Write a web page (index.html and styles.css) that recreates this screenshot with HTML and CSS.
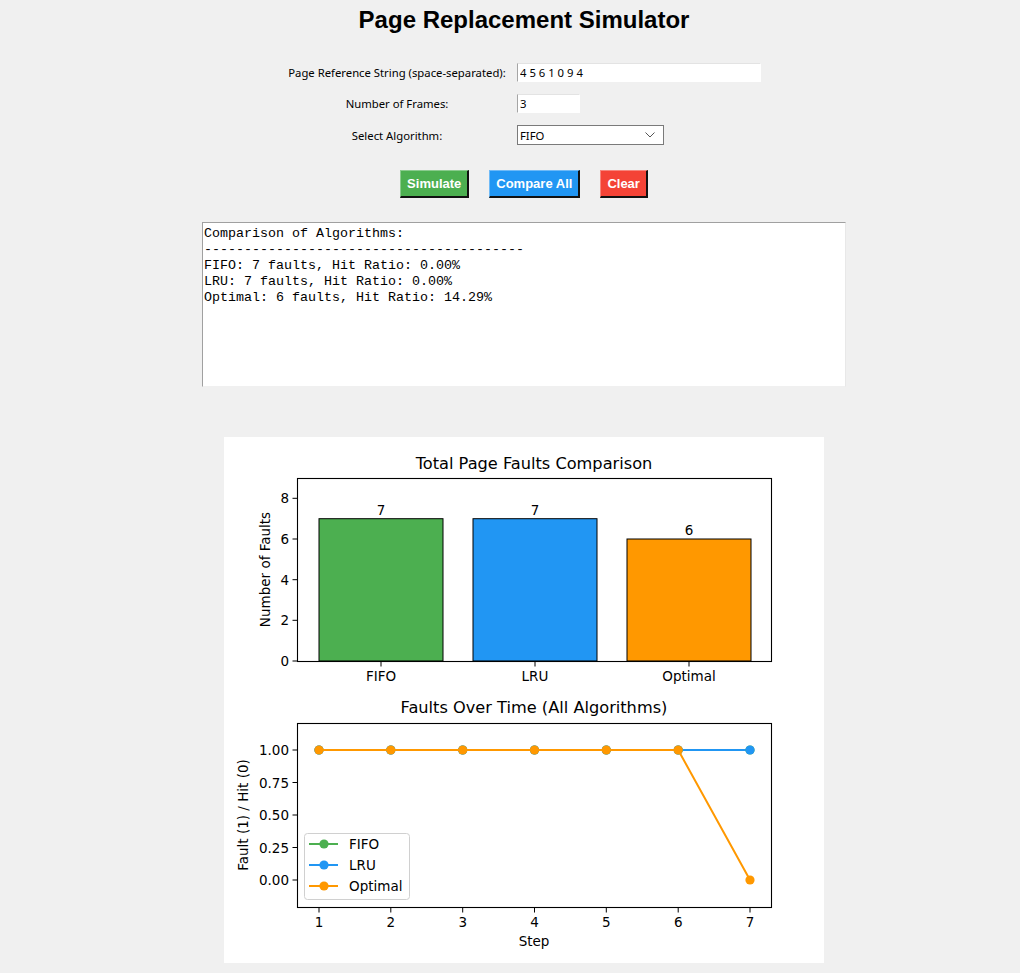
FILE: index.html
```html
<!DOCTYPE html>
<html lang="en">
<head>
<meta charset="utf-8">
<title>Page Replacement Simulator</title>
<link rel="stylesheet" href="styles.css">
</head>
<body>
<main class="app">
  <h1 class="title">Page Replacement Simulator</h1>

  <section class="form">
    <label class="form-label" for="refs">Page Reference String (space-separated):</label>
    <div class="field"><input id="refs" class="entry entry-wide" type="text" value="4 5 6 1 0 9 4"></div>

    <label class="form-label" for="frames">Number of Frames:</label>
    <div class="field"><input id="frames" class="entry entry-short" type="text" value="3"></div>

    <label class="form-label" for="algo">Select Algorithm:</label>
    <div class="field">
      <div class="combo" id="algo">
        <span class="combo-value">FIFO</span>
        <svg class="combo-arrow" width="10" height="6" viewBox="0 0 10 6"><path d="M0.5 0.5 L5 5 L9.5 0.5" fill="none" stroke="#555" stroke-width="1"/></svg>
      </div>
    </div>
  </section>

  <div class="buttons">
    <button class="btn btn-green">Simulate</button>
    <button class="btn btn-blue">Compare All</button>
    <button class="btn btn-red">Clear</button>
  </div>

  <pre class="output">Comparison of Algorithms:
----------------------------------------
FIFO: 7 faults, Hit Ratio: 0.00%
LRU: 7 faults, Hit Ratio: 0.00%
Optimal: 6 faults, Hit Ratio: 14.29%</pre>

  <section class="charts">
    <svg class="chart-svg" width="600" height="526" viewBox="0 0 600 526">
      <!-- Chart 1 -->
      <text class="ct-title" x="310" y="32" text-anchor="middle">Total Page Faults Comparison</text>
      <rect x="95" y="81.7" width="124" height="142.3" fill="#4CAF50" stroke="#000" stroke-width="1"/>
      <rect x="249" y="81.7" width="124" height="142.3" fill="#2196F3" stroke="#000" stroke-width="1"/>
      <rect x="403" y="102" width="124" height="122" fill="#FF9800" stroke="#000" stroke-width="1"/>
      <rect x="73.5" y="41.5" width="474" height="183" fill="none" stroke="#000" stroke-width="1.1"/>
      <text class="ct-tick" x="157" y="78" text-anchor="middle">7</text>
      <text class="ct-tick" x="311" y="78" text-anchor="middle">7</text>
      <text class="ct-tick" x="465" y="98" text-anchor="middle">6</text>
      <g stroke="#000" stroke-width="1">
        <line x1="68.5" y1="224" x2="73" y2="224"/>
        <line x1="68.5" y1="183.3" x2="73" y2="183.3"/>
        <line x1="68.5" y1="142.7" x2="73" y2="142.7"/>
        <line x1="68.5" y1="102" x2="73" y2="102"/>
        <line x1="68.5" y1="61.3" x2="73" y2="61.3"/>
        <line x1="157" y1="225" x2="157" y2="229.5"/>
        <line x1="311" y1="225" x2="311" y2="229.5"/>
        <line x1="465" y1="225" x2="465" y2="229.5"/>
      </g>
      <g class="ct-tick" text-anchor="end">
        <text x="65" y="229">0</text>
        <text x="65" y="188.3">2</text>
        <text x="65" y="147.7">4</text>
        <text x="65" y="107">6</text>
        <text x="65" y="66.3">8</text>
      </g>
      <g class="ct-tick" text-anchor="middle">
        <text x="157" y="244">FIFO</text>
        <text x="311" y="244">LRU</text>
        <text x="465" y="244">Optimal</text>
      </g>
      <text class="ct-tick" text-anchor="middle" transform="translate(46 132.5) rotate(-90)">Number of Faults</text>

      <!-- Chart 2 -->
      <text class="ct-title" x="310" y="276" text-anchor="middle">Faults Over Time (All Algorithms)</text>
      <g fill="none" stroke-width="2" stroke-linejoin="round">
        <polyline stroke="#4CAF50" points="95,313 166.8,313 238.7,313 310.5,313 382.3,313 454.2,313 526,313"/>
        <polyline stroke="#2196F3" points="95,313 166.8,313 238.7,313 310.5,313 382.3,313 454.2,313 526,313"/>
      </g>
      <g fill="#4CAF50">
        <circle cx="95" cy="313" r="4.6"/><circle cx="166.8" cy="313" r="4.6"/><circle cx="238.7" cy="313" r="4.6"/><circle cx="310.5" cy="313" r="4.6"/><circle cx="382.3" cy="313" r="4.6"/><circle cx="454.2" cy="313" r="4.6"/><circle cx="526" cy="313" r="4.6"/>
      </g>
      <g fill="#2196F3">
        <circle cx="95" cy="313" r="4.6"/><circle cx="166.8" cy="313" r="4.6"/><circle cx="238.7" cy="313" r="4.6"/><circle cx="310.5" cy="313" r="4.6"/><circle cx="382.3" cy="313" r="4.6"/><circle cx="454.2" cy="313" r="4.6"/><circle cx="526" cy="313" r="4.6"/>
      </g>
      <polyline fill="none" stroke="#FF9800" stroke-width="2" stroke-linejoin="round" points="95,313 166.8,313 238.7,313 310.5,313 382.3,313 454.2,313 526,443"/>
      <g fill="#FF9800">
        <circle cx="95" cy="313" r="4.6"/><circle cx="166.8" cy="313" r="4.6"/><circle cx="238.7" cy="313" r="4.6"/><circle cx="310.5" cy="313" r="4.6"/><circle cx="382.3" cy="313" r="4.6"/><circle cx="454.2" cy="313" r="4.6"/><circle cx="526" cy="443" r="4.6"/>
      </g>
      <rect x="73.5" y="286.5" width="474" height="184" fill="none" stroke="#000" stroke-width="1.1"/>
      <g stroke="#000" stroke-width="1">
        <line x1="68.5" y1="313" x2="73" y2="313"/>
        <line x1="68.5" y1="345.5" x2="73" y2="345.5"/>
        <line x1="68.5" y1="378" x2="73" y2="378"/>
        <line x1="68.5" y1="410.5" x2="73" y2="410.5"/>
        <line x1="68.5" y1="443" x2="73" y2="443"/>
        <line x1="95" y1="471" x2="95" y2="475.5"/>
        <line x1="166.8" y1="471" x2="166.8" y2="475.5"/>
        <line x1="238.7" y1="471" x2="238.7" y2="475.5"/>
        <line x1="310.5" y1="471" x2="310.5" y2="475.5"/>
        <line x1="382.3" y1="471" x2="382.3" y2="475.5"/>
        <line x1="454.2" y1="471" x2="454.2" y2="475.5"/>
        <line x1="526" y1="471" x2="526" y2="475.5"/>
      </g>
      <g class="ct-tick" text-anchor="end">
        <text x="65" y="318">1.00</text>
        <text x="65" y="350.5">0.75</text>
        <text x="65" y="383">0.50</text>
        <text x="65" y="415.5">0.25</text>
        <text x="65" y="448">0.00</text>
      </g>
      <g class="ct-tick" text-anchor="middle">
        <text x="95" y="490">1</text>
        <text x="166.8" y="490">2</text>
        <text x="238.7" y="490">3</text>
        <text x="310.5" y="490">4</text>
        <text x="382.3" y="490">5</text>
        <text x="454.2" y="490">6</text>
        <text x="526" y="490">7</text>
      </g>
      <text class="ct-tick" x="310" y="509" text-anchor="middle">Step</text>
      <text class="ct-tick" text-anchor="middle" transform="translate(24 378) rotate(-90)">Fault (1) / Hit (0)</text>

      <!-- Legend -->
      <rect x="80.5" y="396.5" width="105" height="66" rx="3" fill="#fff" fill-opacity="0.8" stroke="#d0d0d0" stroke-width="1"/>
      <line x1="85" y1="407" x2="114" y2="407" stroke="#4CAF50" stroke-width="2"/>
      <circle cx="100" cy="407" r="4.6" fill="#4CAF50"/>
      <line x1="85" y1="428" x2="114" y2="428" stroke="#2196F3" stroke-width="2"/>
      <circle cx="100" cy="428" r="4.6" fill="#2196F3"/>
      <line x1="85" y1="449" x2="114" y2="449" stroke="#FF9800" stroke-width="2"/>
      <circle cx="100" cy="449" r="4.6" fill="#FF9800"/>
      <g class="ct-tick">
        <text x="125" y="411.5">FIFO</text>
        <text x="125" y="432.5">LRU</text>
        <text x="125" y="453.5">Optimal</text>
      </g>
    </svg>
  </section>
</main>
</body>
</html>
```

FILE: styles.css
```css
* { box-sizing: border-box; }

html, body {
  margin: 0;
  padding: 0;
  background: #f0f0f0;
}

body {
  font-family: "Noto Sans", "Open Sans", sans-serif;
  color: #000;
}

.app {
  margin-left: 28px;
  width: 992px;
  display: flex;
  flex-direction: column;
  align-items: center;
}

.title {
  margin: 8px 0 0;
  font-family: "Liberation Sans", Arial, sans-serif;
  font-weight: bold;
  font-size: 24px;
  line-height: 24px;
}

.form {
  margin-top: 31px;
  padding-right: 5px;
  display: grid;
  grid-template-columns: 230px 244px;
  column-gap: 5px;
  row-gap: 12px;
  align-items: center;
}

.form-label {
  text-align: center;
  font-size: 11.3px;
  line-height: 19px;
  white-space: nowrap;
}

.field {
  display: flex;
  align-items: center;
}

.entry {
  height: 19px;
  padding: 0 2px;
  margin: 0;
  background: #fff;
  border: 1px solid #fff;
  border-top-color: #e3e3e3;
  border-left-color: #a5a5a5;
  font-family: "Noto Sans", "Open Sans", sans-serif;
  font-size: 11.3px;
  color: #000;
  outline: none;
}

.entry-wide { width: 244px; }
.entry-short { width: 63px; }

.combo {
  width: 147px;
  height: 20px;
  background: #fff;
  border: 1px solid #7a7a7a;
  display: flex;
  align-items: center;
  justify-content: space-between;
  padding: 0 8px 0 2px;
  font-size: 11.3px;
}

.combo-arrow { display: block; }

.buttons {
  margin-top: 25px;
  display: flex;
  gap: 20px;
}

.btn {
  height: 28px;
  padding: 0 6px;
  margin: 0;
  font-family: "Liberation Sans", Arial, sans-serif;
  font-weight: bold;
  font-size: 13px;
  color: #fff;
  border: 1px solid;
  border-right-width: 2px;
  border-bottom-width: 2px;
  border-top-color: rgba(255,255,255,0.35);
  border-left-color: rgba(255,255,255,0.35);
  border-right-color: #111;
  border-bottom-color: #111;
  cursor: pointer;
}

.btn-green { background: #4CAF50; }
.btn-blue { background: #2196F3; }
.btn-red { background: #F44336; }

.output {
  margin: 24px 0 0;
  width: 644px;
  height: 165px;
  background: #fff;
  border: 1px solid #fff;
  border-top-color: #a0a0a0;
  border-left-color: #a0a0a0;
  border-right-color: #e8e8e8;
  border-bottom-color: #f0f0f0;
  padding: 3px 1px 1px;
  font-family: "Liberation Mono", "Courier New", monospace;
  font-size: 13.33px;
  line-height: 16px;
  overflow: hidden;
}

.charts {
  margin-top: 50px;
  width: 600px;
  height: 526px;
  background: #fff;
}

.chart-svg {
  display: block;
  font-family: "DejaVu Sans", sans-serif;
}

.ct-title { font-size: 16.2px; fill: #000; }
.ct-tick { font-size: 13.5px; fill: #000; }
```
